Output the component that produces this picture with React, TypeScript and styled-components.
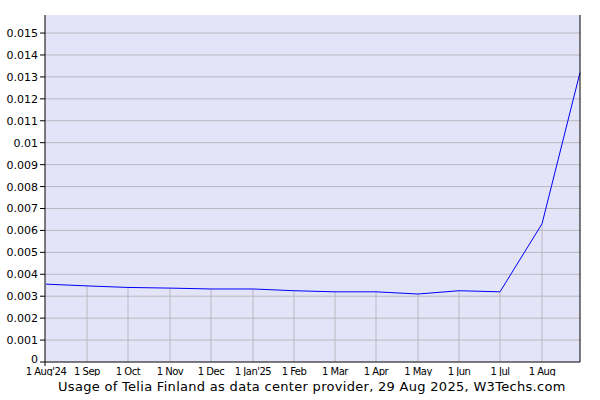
import React from "react";
import styled, { createGlobalStyle } from "styled-components";

const Global = createGlobalStyle`
  html, body { margin: 0; padding: 0; background: #fff; }
`;

const Frame = styled.div`
  width: 600px;
  height: 400px;
  display: flex;
  flex-direction: column;
  font-family: "DejaVu Sans", Verdana, sans-serif;
`;

const Chart = styled.svg`
  display: block;
  width: 600px;
  height: 376px;
`;

const Caption = styled.div`
  height: 24px;
  font-size: 13px;
  color: #000;
  padding-left: 58px;
  line-height: 22px;
  letter-spacing: 0.3px;
`;

const L = 45, R = 580, T = 15, B = 362;
const sy = (v: number) => B - v * 21930;
const months = [
  ["1 Aug'24", 46], ["1 Sep", 87], ["1 Oct", 128], ["1 Nov", 170], ["1 Dec", 211],
  ["1 Jan'25", 253], ["1 Feb", 294], ["1 Mar", 335], ["1 Apr", 376], ["1 May", 418],
  ["1 Jun", 459], ["1 Jul", 500], ["1 Aug", 542],
] as [string, number][];
const vals = [0.00355, 0.00347, 0.0034, 0.00337, 0.00333, 0.00333, 0.00325, 0.0032, 0.0032, 0.0031, 0.00325, 0.0032, 0.0063];
const pts: [number, number][] = months.map((m, i) => [m[1], sy(vals[i])]);
pts.push([580, sy(0.0132)]);

export default function App() {
  const yt = Array.from({ length: 16 }, (_, i) => i);
  return (
    <Frame>
      <Global />
      <Chart viewBox="0 0 600 376">
        <rect x={L} y={T} width={R - L} height={B - T} fill="#e4e4f8" />
        {yt.slice(1).map(i => (
          <line key={i} x1={L} x2={R} y1={sy(i / 1000)} y2={sy(i / 1000)} stroke="#b8b8c0" strokeWidth={1} />
        ))}
        {pts.slice(1, 13).map(([x, y], i) => (
          <line key={i} x1={x} x2={x} y1={y} y2={B} stroke="#b8b8c0" strokeWidth={1} />
        ))}
        <polyline points={pts.map(p => p.join(",")).join(" ")} fill="none" stroke="#0000ff" strokeWidth={1} />
        <line x1={L} x2={L} y1={T} y2={B + 4} stroke="#000" />
        <line x1={R} x2={R} y1={T} y2={B} stroke="#000" />
        <line x1={L} x2={R} y1={B} y2={B} stroke="#000" />
        {yt.map(i => (
          <g key={i}>
            <line x1={L - 5} x2={L} y1={sy(i / 1000)} y2={sy(i / 1000)} stroke="#000" />
            <text x={L - 7} y={sy(i / 1000) + (i === 0 ? 1 : 4)} fontSize={11} textAnchor="end" fill="#000">
              {i === 0 ? "0" : i === 10 ? "0.01" : (i / 1000).toFixed(3)}
            </text>
          </g>
        ))}
        {months.map(([t, x]) => (
          <text key={t} x={x} y={B + 13} fontSize={10} textAnchor="middle" letterSpacing={-0.5} fill="#000">{t}</text>
        ))}
      </Chart>
      <Caption>Usage of Telia Finland as data center provider, 29 Aug 2025, W3Techs.com</Caption>
    </Frame>
  );
}
